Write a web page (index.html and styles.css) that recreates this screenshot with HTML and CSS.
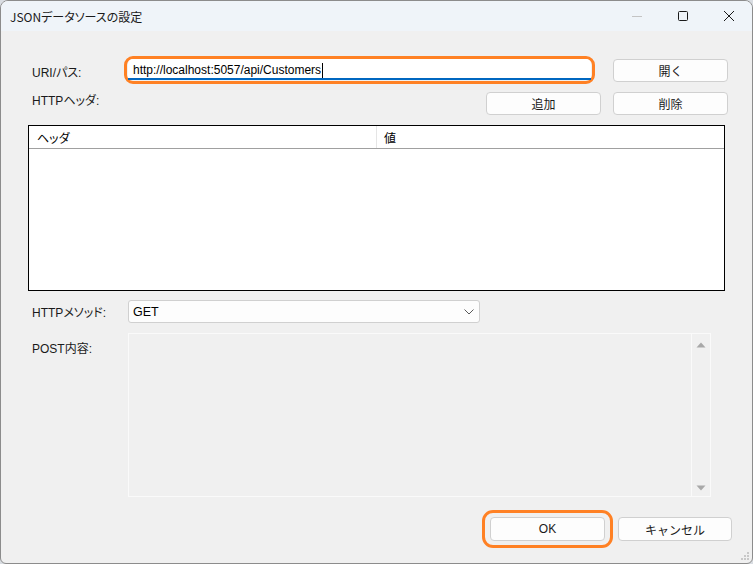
FILE: index.html
```html
<!DOCTYPE html>
<html lang="ja">
<head>
    <meta charset="UTF-8">
    <meta name="viewport" content="width=device-width, initial-scale=1.0">
    <title>JSONデータソースの設定</title>
    <link rel="stylesheet" href="styles.css">
</head>

<body>
    <div class="window">
        <div class="titlebar">
            <span class="title">JSONデータソースの設定</span>
            <div class="controls">
                <span class="ctl ctl-min"><svg width="12" height="12" viewBox="0 0 12 12"><path d="M1 6.5h10" stroke="#c4c4c4" stroke-width="1"/></svg></span>
                <span class="ctl"><svg width="12" height="12" viewBox="0 0 12 12"><rect x="1.5" y="1.5" width="9" height="9" rx="1" fill="none" stroke="#1a1a1a" stroke-width="1"/></svg></span>
                <span class="ctl"><svg width="12" height="12" viewBox="0 0 12 12"><path d="M1 1l10 10M11 1L1 11" stroke="#1a1a1a" stroke-width="1"/></svg></span>
            </div>
        </div>

        <div class="content">
            <div class="row row-uri">
                <label class="label">URI/パス:</label>
                <div class="focus-ring uri-ring">
                    <div class="textbox">http://localhost:5057/api/Customers<span class="caret"></span></div>
                </div>
                <button class="btn btn-open" type="button">開く</button>
            </div>

            <div class="row row-headers">
                <label class="label">HTTPヘッダ:</label>
                <div class="btn-pair">
                    <button class="btn" type="button">追加</button>
                    <button class="btn" type="button">削除</button>
                </div>
            </div>

            <div class="grid">
                <div class="grid-head">
                    <div class="col col-key">ヘッダ</div>
                    <div class="col col-val">値</div>
                </div>
            </div>

            <div class="row row-method">
                <label class="label">HTTPメソッド:</label>
                <div class="select">
                    <span>GET</span>
                    <svg width="12" height="8" viewBox="0 0 12 8"><path d="M1.5 1.5l4.5 4.5 4.5-4.5" fill="none" stroke="#5a5a5a" stroke-width="1"/></svg>
                </div>
            </div>

            <div class="row row-post">
                <label class="label">POST内容:</label>
                <div class="post-box">
                    <div class="scrollbar">
                        <svg width="10" height="6" viewBox="0 0 10 6"><path d="M0.5 5.5L5 0.5l4.5 5z" fill="#a8a8a8"/></svg>
                        <svg width="10" height="6" viewBox="0 0 10 6"><path d="M0.5 0.5h9L5 5.5z" fill="#a8a8a8"/></svg>
                    </div>
                </div>
            </div>

            <div class="footer">
                <div class="focus-ring ok-ring">
                    <button class="btn btn-ok" type="button">OK</button>
                </div>
                <button class="btn btn-cancel" type="button">キャンセル</button>
            </div>
        </div>
        <svg class="grip" width="10" height="10" viewBox="0 0 10 10">
            <rect x="7" y="1" width="2" height="2" fill="#c8c8c8"/>
            <rect x="4" y="4" width="2" height="2" fill="#c8c8c8"/>
            <rect x="7" y="4" width="2" height="2" fill="#c8c8c8"/>
            <rect x="1" y="7" width="2" height="2" fill="#c8c8c8"/>
            <rect x="4" y="7" width="2" height="2" fill="#c8c8c8"/>
            <rect x="7" y="7" width="2" height="2" fill="#c8c8c8"/>
        </svg>
    </div>
</body>
</html>
```

FILE: styles.css
```css
html, body {
    margin: 0;
    padding: 0;
    background-color: #d9dde2;
}

body {
    font-family: 'Liberation Sans', 'Noto Sans CJK JP', sans-serif;
    font-size: 12px;
    color: #000;
    font-feature-settings: "palt";
}

.window {
    position: relative;
    width: 753px;
    height: 564px;
    box-sizing: border-box;
    border: 1px solid #8c8c8c;
    border-radius: 8px 8px 6px 6px;
    background-color: #f0f0f0;
    overflow: hidden;
    display: flex;
    flex-direction: column;
}

.titlebar {
    height: 30px;
    flex: none;
    background-color: #eff4f9;
    display: flex;
    align-items: center;
    justify-content: space-between;
    padding-left: 9px;
}

.title {
    font-family: 'Noto Sans CJK JP', sans-serif;
    font-size: 12px;
    color: #1a1a1a;
}

.controls {
    display: flex;
    height: 100%;
}

.ctl {
    width: 46px;
    display: flex;
    align-items: center;
    justify-content: center;
}

.content {
    flex: 1;
    display: flex;
    flex-direction: column;
    padding: 25px 0 0 27px;
}

.row {
    display: flex;
    align-items: center;
}

.label {
    width: 100px;
    padding-left: 4px;
    box-sizing: border-box;
    flex: none;
    color: #1a1a1a;
}

.btn {
    font-family: 'Noto Sans CJK JP', sans-serif;
    font-size: 12px;
    color: #1a1a1a;
    background-color: #fdfdfd;
    border: 1px solid #d0d0d0;
    border-radius: 4px;
    height: 23px;
    width: 115px;
    padding: 0;
}

/* URI row */
.row-uri {
    height: 28px;
    align-items: flex-start;
}

.row-uri .label {
    width: 96px;
    margin-top: 7px;
}

.focus-ring {
    border: 3px solid #ff8124;
    border-radius: 9px;
    box-sizing: border-box;
}

.uri-ring {
    width: 471px;
    height: 28px;
    padding: 0 1px 1px;
    display: flex;
}

.textbox {
    flex: 1;
    background-color: #fff;
    border-bottom: 2px solid #0067c0;
    border-radius: 5px 5px 0 0;
    padding: 4px 0 0 5px;
    box-sizing: border-box;
    font-size: 12px;
    line-height: 15px;
    white-space: nowrap;
}

.caret {
    display: inline-block;
    width: 1px;
    height: 15px;
    background-color: #000;
    vertical-align: top;
    margin-left: 1px;
}

.btn-open {
    margin-left: 18px;
    margin-top: 3px;
}

/* header buttons */
.row-headers {
    margin-top: 8px;
    height: 23px;
}

.row-headers .label {
    align-self: flex-start;
    line-height: 16px;
    padding-top: 1px;
}

.btn-pair {
    margin-left: 358px;
    display: flex;
    gap: 12px;
}

/* header grid */
.grid {
    margin-top: 10px;
    width: 697px;
    height: 166px;
    box-sizing: border-box;
    border: 1px solid #000;
    background-color: #fff;
}

.grid-head {
    display: flex;
    height: 22px;
    border-bottom: 1px solid #a0a0a0;
    font-family: 'Noto Sans CJK JP', sans-serif;
}

.col {
    display: flex;
    align-items: center;
    padding-left: 8px;
    box-sizing: border-box;
}

.col-key {
    width: 348px;
    border-right: 1px solid #e5e5e5;
}

.col-val {
    padding-left: 7px;
}

/* method */
.row-method {
    margin-top: 9px;
    height: 23px;
}

.select {
    width: 352px;
    height: 23px;
    box-sizing: border-box;
    background-color: #fdfdfd;
    border: 1px solid #d0d0d0;
    border-radius: 3px;
    display: flex;
    align-items: center;
    justify-content: space-between;
    padding: 0 4px 0 4px;
    font-size: 12.5px;
}

/* post body */
.row-post {
    margin-top: 10px;
    align-items: flex-start;
}

.row-post .label {
    margin-top: 6px;
}

.post-box {
    width: 583px;
    height: 164px;
    box-sizing: border-box;
    border: 1px solid #fafafa;
    display: flex;
    justify-content: flex-end;
}

.scrollbar {
    width: 18px;
    border-left: 1px solid #fafafa;
    display: flex;
    flex-direction: column;
    justify-content: space-between;
    align-items: center;
    padding: 8px 0 5px;
}

/* footer */
.footer {
    margin-top: 13px;
    display: flex;
    align-items: center;
    padding-left: 454px;
}

.ok-ring {
    width: 131px;
    height: 38px;
    display: flex;
    align-items: center;
    justify-content: center;
    border-radius: 11px;
}

.btn-ok {
    width: 115px;
    height: 24px;
    font-family: 'Liberation Sans', sans-serif;
}

.btn-cancel {
    margin-left: 5px;
    width: 114px;
    height: 24px;
}

.grip {
    position: absolute;
    right: 2px;
    bottom: 2px;
}
```
